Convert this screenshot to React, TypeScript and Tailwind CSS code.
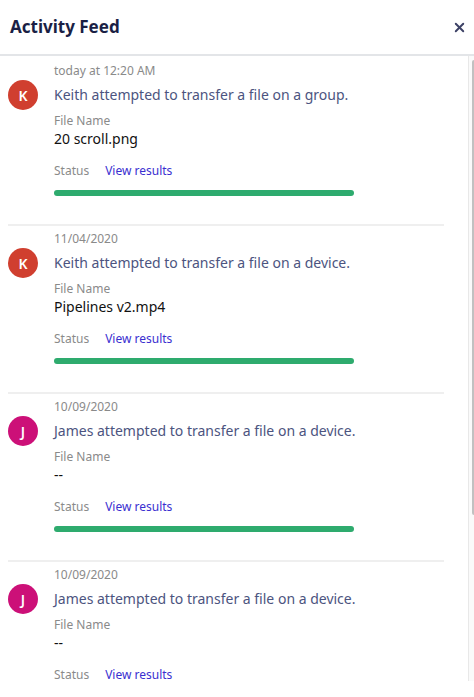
import { X } from 'lucide-react';

type Activity = {
  time: string;
  name: string;
  initial: string;
  avatar: string;
  target: string;
  fileName: string;
};

const activities: Activity[] = [
  { time: 'today at 12:20 AM', name: 'Keith', initial: 'K', avatar: 'bg-[#d03f2f]', target: 'group', fileName: '20 scroll.png' },
  { time: '11/04/2020', name: 'Keith', initial: 'K', avatar: 'bg-[#d03f2f]', target: 'device', fileName: 'Pipelines v2.mp4' },
  { time: '10/09/2020', name: 'James', initial: 'J', avatar: 'bg-[#cc1078]', target: 'device', fileName: '--' },
  { time: '10/09/2020', name: 'James', initial: 'J', avatar: 'bg-[#cc1078]', target: 'device', fileName: '--' },
];

function ActivityItem({ item }: { item: Activity }) {
  return (
    <div className="ml-2 mr-[24px] border-b-2 border-[#efefef] pb-[28px] pt-[5px]">
      <div className="pl-[46px] text-[12px] leading-[16px] text-[#8a8a8a]">{item.time}</div>
      <div className="mt-[6px] flex items-center">
        <div
          className={`-my-[5px] flex h-[30px] w-[30px] shrink-0 items-center justify-center rounded-full text-[14px] font-semibold text-white ${item.avatar}`}
        >
          {item.initial}
        </div>
        <div className="ml-[16px] text-[14px] leading-[20px] text-[#4c5480]">
          {item.name} attempted to transfer a file on a {item.target}.
        </div>
      </div>
      <div className="pl-[46px]">
        <div className="mt-[8px] text-[12px] leading-[16px] text-[#8a8a8a]">File Name</div>
        <div className="text-[14px] leading-[20px] text-[#111]">{item.fileName}</div>
        <div className="mt-[14px] flex items-center gap-[16px] text-[12px] leading-[16px]">
          <span className="text-[#8a8a8a]">Status</span>
          <a className="cursor-pointer text-[#3a2fd0]">View results</a>
        </div>
        <div className="mt-[11px] h-[6px] w-[300px] rounded-full bg-[#2eab6e]" />
      </div>
    </div>
  );
}

export default function App() {
  return (
    <div
      className="h-[697px] w-[474px] overflow-hidden bg-white"
      style={{ fontFamily: '"Noto Sans", "Open Sans", sans-serif' }}
    >
      <div className="flex h-[56px] items-center justify-between border-b-2 border-[#e3e5e8] pl-[10px] pr-[7px]">
        <h1 className="text-[17px] font-bold text-[#1a1f45]">Activity Feed</h1>
        <X className="h-[15px] w-[15px] text-[#3d4266]" strokeWidth={3} />
      </div>
      <div className="flex h-[625px]">
        <div className="flex-1 overflow-hidden pt-[2px]">
          {activities.map((a, i) => (
            <ActivityItem key={i} item={a} />
          ))}
        </div>
        <div className="w-[6px] border-l border-[#e8e8e8] bg-[#fafafa] pl-[3px] pt-[4px]">
          <div className="h-[455px] w-[4px] rounded-full bg-[#c1c1c1]" />
        </div>
      </div>
    </div>
  );
}
